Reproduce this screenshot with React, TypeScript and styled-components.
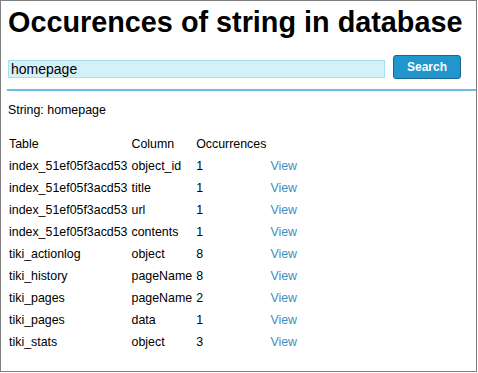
import React from "react";
import styled, { createGlobalStyle } from "styled-components";

const Global = createGlobalStyle`
  html, body { margin: 0; padding: 0; background: #fff; }
  body { font-family: "Liberation Sans", Arial, sans-serif; color: #000; }
`;

const Frame = styled.div`
  box-sizing: border-box;
  width: 477px;
  height: 372px;
  border: 1px solid #808080;
  overflow: hidden;
  padding: 0 0 0 6px;
`;

const Title = styled.h1`
  margin: 0;
  padding: 3px 0 0 1px;
  font-size: 28.8px;
  line-height: 36px;
  font-weight: bold;
`;

const SearchBar = styled.form`
  display: flex;
  align-items: center;
  gap: 8px;
  margin: 14px 0 0 1px;
  height: 26px;
`;

const Input = styled.input`
  box-sizing: border-box;
  width: 377px;
  height: 18px;
  margin-top: 4px;
  padding: 0 2px;
  border: 1px solid #a6e0f0;
  background: #d5f1f8;
  font-family: "Liberation Sans", Arial, sans-serif;
  font-size: 14px;
  color: #000;
  outline: none;
`;

const Button = styled.button`
  box-sizing: border-box;
  width: 68px;
  height: 24px;
  border: 1px solid #1a6690;
  border-radius: 3px;
  background: #2196cc;
  color: #fff;
  font-family: "Liberation Sans", Arial, sans-serif;
  font-weight: bold;
  font-size: 12px;
  padding: 0;
`;

const Rule = styled.div`
  height: 2px;
  background: #6cbde3;
  margin: 9px -2px 0 0;
`;

const Info = styled.p`
  margin: 11px 0 0 1px;
  font-size: 12.4px;
  line-height: 16px;
`;

const Table = styled.table`
  margin: 15px 0 0 0;
  border-collapse: collapse;
  font-size: 12.4px;
`;

const Cell = styled.td`
  padding: 0 2px;
  height: 22px;
  line-height: 14px;
  white-space: nowrap;
  text-align: left;
  vertical-align: middle;
`;

const Head = styled(Cell).attrs({ as: "th" })`
  font-weight: normal;
`;

const ViewLink = styled.a`
  color: #3a8fc2;
  text-decoration: none;
`;

const rows: [string, string, number][] = [
  ["index_51ef05f3acd53", "object_id", 1],
  ["index_51ef05f3acd53", "title", 1],
  ["index_51ef05f3acd53", "url", 1],
  ["index_51ef05f3acd53", "contents", 1],
  ["tiki_actionlog", "object", 8],
  ["tiki_history", "pageName", 8],
  ["tiki_pages", "pageName", 2],
  ["tiki_pages", "data", 1],
  ["tiki_stats", "object", 3],
];

export default function App() {
  return (
    <>
      <Global />
      <Frame>
        <Title>Occurences of string in database</Title>
        <SearchBar onSubmit={(e) => e.preventDefault()}>
          <Input defaultValue="homepage" />
          <Button type="submit">Search</Button>
        </SearchBar>
        <Rule />
        <Info>String: homepage</Info>
        <Table>
          <thead>
            <tr>
              <Head>Table</Head>
              <Head>Column</Head>
              <Head>Occurrences</Head>
              <Head></Head>
            </tr>
          </thead>
          <tbody>
            {rows.map(([t, c, n], i) => (
              <tr key={i}>
                <Cell>{t}</Cell>
                <Cell>{c}</Cell>
                <Cell>{n}</Cell>
                <Cell>
                  <ViewLink href="#">View</ViewLink>
                </Cell>
              </tr>
            ))}
          </tbody>
        </Table>
      </Frame>
    </>
  );
}
